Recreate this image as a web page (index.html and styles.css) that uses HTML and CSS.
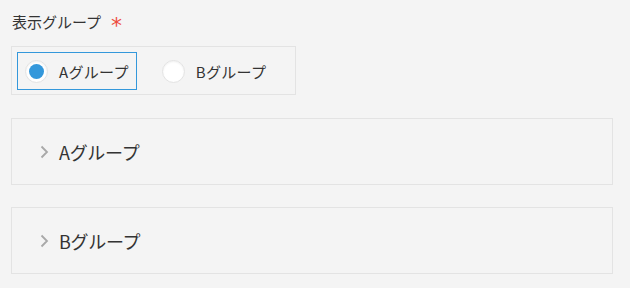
FILE: index.html
```html
<!DOCTYPE html>
<html lang="ja">
<head>
  <meta charset="UTF-8" />
  <title>表示グループ</title>
  <link rel="stylesheet" href="styles.css">
</head>
<body>
  <div class="container">
    <div class="field">
      <div class="field-label">表示グループ<span class="required">*</span></div>
      <div class="radio-group">
        <label class="radio-item focused">
          <span class="radio checked"></span>
          <span class="radio-text">Aグループ</span>
        </label>
        <label class="radio-item">
          <span class="radio"></span>
          <span class="radio-text">Bグループ</span>
        </label>
      </div>
    </div>

    <div class="group">
      <svg class="chevron" width="9" height="14" viewBox="0 0 9 14">
        <path d="M1.5 1.5 L7 7 L1.5 12.5" fill="none" stroke="#a8a8a8" stroke-width="1.8"/>
      </svg>
      <span class="group-title">Aグループ</span>
    </div>

    <div class="group">
      <svg class="chevron" width="9" height="14" viewBox="0 0 9 14">
        <path d="M1.5 1.5 L7 7 L1.5 12.5" fill="none" stroke="#a8a8a8" stroke-width="1.8"/>
      </svg>
      <span class="group-title">Bグループ</span>
    </div>
  </div>
</body>
</html>
```

FILE: styles.css
```css
body {
  margin: 0;
  padding: 0;
  background: #f4f4f4;
  color: #333;
  font-family: "Noto Sans CJK JP", "Noto Sans", sans-serif;
}

.container {
  padding: 10px 17px 0 11px;
}

.field-label {
  font-size: 15px;
  line-height: 24px;
  height: 24px;
  padding-left: 1px;
}

.required {
  color: #ee4b3e;
  font-family: "DejaVu Sans", sans-serif;
  font-size: 22px;
  line-height: 0;
  margin-left: 10px;
  vertical-align: -5px;
}

.radio-group {
  display: inline-flex;
  align-items: center;
  gap: 17px;
  margin-top: 12px;
  padding: 5px 21px 4px 5px;
  border: 1px solid #e3e3e3;
}

.radio-item {
  display: flex;
  align-items: center;
  height: 36px;
  padding: 0 7px;
  border: 1px solid transparent;
  cursor: pointer;
}

.radio-item.focused {
  border-color: #3498db;
}

.radio {
  width: 21px;
  height: 21px;
  border: 1px solid #e3e3e3;
  border-radius: 50%;
  background: #fff;
  box-shadow: inset 0 1px 2px rgba(0, 0, 0, 0.06);
  display: flex;
  align-items: center;
  justify-content: center;
}

.radio.checked::after {
  content: "";
  width: 15px;
  height: 15px;
  border-radius: 50%;
  background: #3498db;
}

.radio-text {
  margin-left: 11px;
  font-size: 15px;
  letter-spacing: 0.3px;
}

.group {
  display: flex;
  align-items: center;
  height: 65px;
  margin-top: 23px;
  padding-left: 28px;
  border: 1px solid #e3e3e3;
}

.group + .group {
  margin-top: 22px;
}

.chevron {
  margin-right: 10px;
}

.group-title {
  font-size: 18px;
  letter-spacing: -0.3px;
}
```
